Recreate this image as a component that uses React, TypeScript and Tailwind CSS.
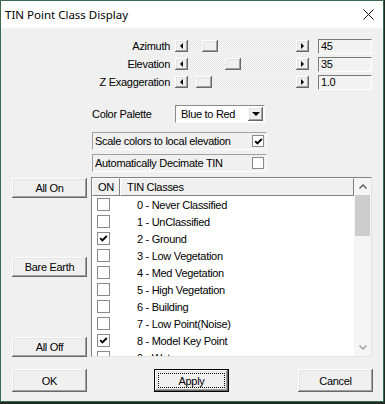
import React from "react";

const raised =
  "bg-[#f0f0f0] shadow-[inset_-1px_-1px_#696969,inset_1px_1px_#ffffff,inset_-2px_-2px_#a0a0a0,inset_2px_2px_#e3e3e3]";

function Btn({ label, w = "w-[75px]", h = "h-[20px]", cls = "" }: { label: string; w?: string; h?: string; cls?: string }) {
  return (
    <div className={`${raised} ${w} ${h} ${cls} flex items-center justify-center shrink-0`}>
      <span className="pt-[1px]">{label}</span>
    </div>
  );
}

function Tri({ dir }: { dir: "l" | "r" | "d" }) {
  if (dir === "l")
    return <div className="w-0 h-0 border-y-[3px] border-y-transparent border-r-[3px] border-r-black" />;
  if (dir === "r")
    return <div className="w-0 h-0 border-y-[3px] border-y-transparent border-l-[3px] border-l-black" />;
  return <div className="w-0 h-0 border-x-[4px] border-x-transparent border-t-[4px] border-t-black" />;
}

function Slider({ pos, value, label }: { pos: number; value: string; label: string }) {
  return (
    <div className="flex items-center h-[18px]">
      <div className="w-[169px] text-right pt-[1px]">{label}</div>
      <div className="ml-[5px] w-[134px] h-[12px] flex bg-[repeating-conic-gradient(#e2e2e2_0_25%,#fbfbfb_0_50%)] bg-[length:2px_2px]">
        <div className={`${raised} w-[13px] h-[12px] flex items-center justify-center`}>
          <Tri dir="l" />
        </div>
        <div className="relative flex-1">
          <div className={`${raised} absolute top-0 w-[16px] h-[12px]`} style={{ left: pos }} />
        </div>
        <div className={`${raised} w-[13px] h-[12px] flex items-center justify-center`}>
          <Tri dir="r" />
        </div>
      </div>
      <div className="ml-[9px] w-[54px] h-[15px] bg-[#f2f2f2] border-t border-l border-[#7a7a7a] border-b border-r border-b-white border-r-white flex items-center pl-[2px] pt-[1px]">
        {value}
      </div>
    </div>
  );
}

function Check({ on, size = "w-[12px] h-[12px]" }: { on: boolean; size?: string }) {
  return (
    <div className={`${size} bg-white border border-[#8a8a8a] flex items-center justify-center`}>
      {on && (
        <svg width="9" height="9" viewBox="0 0 9 9">
          <path d="M1.2 4.2 L3.4 6.5 L7.8 2" stroke="#000" strokeWidth="1.9" fill="none" />
        </svg>
      )}
    </div>
  );
}

const rows: [string, boolean][] = [
  ["0 - Never Classified", false],
  ["1 - UnClassified", false],
  ["2 - Ground", true],
  ["3 - Low Vegetation", false],
  ["4 - Med Vegetation", false],
  ["5 - High Vegetation", false],
  ["6 - Building", false],
  ["7 - Low Point(Noise)", false],
  ["8 - Model Key Point", true],
  ["9 - Water", false],
];

export default function App() {
  return (
    <div className="w-[385px] h-[404px] bg-[#1f2a24] font-['Liberation_Sans',Arial,sans-serif] text-[11px] tracking-[-0.3px] text-black leading-none">
      <div className="w-[384px] h-[402px] border border-[#3a6b4e] bg-[#f0f0f0] flex flex-col overflow-hidden">
        {/* title bar */}
        <div className="h-[27px] bg-white flex items-center justify-between pl-[4px] pr-[8px] shrink-0">
          <span className="font-['Noto_Sans',sans-serif] text-[11.5px] tracking-normal">TIN Point Class Display</span>
          <svg width="11" height="11" viewBox="0 0 11 11" className="mr-[1px]">
            <path d="M0.5 0.5 L10.5 10.5 M10.5 0.5 L0.5 10.5" stroke="#111" strokeWidth="1" />
          </svg>
        </div>

        {/* sliders */}
        <div className="pt-[9px] flex flex-col">
          <Slider label="Azimuth" pos={14} value="45" />
          <Slider label="Elevation" pos={37} value="35" />
          <Slider label="Z Exaggeration" pos={8} value="1.0" />
        </div>

        {/* color palette */}
        <div className="mt-[14px] flex items-center h-[18px] pl-[91px]">
          <div className="w-[83px] pt-[1px]">Color Palette</div>
          <div className="w-[90px] h-[18px] bg-white border-t border-l border-[#8a8a8a] border-b border-r border-b-white border-r-white flex items-center">
            <span className="pl-[5px] flex-1 pt-[1px]">Blue to Red</span>
            <div className={`${raised} w-[15px] h-[14px] mr-[1px] flex items-center justify-center`}>
              <Tri dir="d" />
            </div>
          </div>
        </div>

        <div className="mt-[9px] ml-[91px] w-[175px] h-[18px] border-t border-l border-[#a0a0a0] border-b border-r border-b-white border-r-white flex items-center pl-[2px]">
          <span className="flex-1 pt-[1px]">Scale colors to local elevation</span>
          <Check on={true} size="w-[12px] h-[12px] mr-[2px]" />
        </div>
        <div className="mt-[4px] ml-[91px] w-[175px] h-[18px] border-t border-l border-[#a0a0a0] border-b border-r border-b-white border-r-white flex items-center pl-[2px]">
          <span className="flex-1 pt-[1px]">Automatically Decimate TIN</span>
          <Check on={false} size="w-[12px] h-[12px] mr-[2px]" />
        </div>

        {/* lower section */}
        <div className="mt-[5px] flex pl-[11px]">
          <div className="flex flex-col w-[75px]">
            <Btn label="All On" cls="mt-[1px]" />
            <Btn label="Bare Earth" cls="mt-[59px]" />
            <Btn label="All Off" cls="mt-[60px]" />
          </div>
          <div className="ml-[4px] w-[281px] h-[180px] bg-white border-t border-l border-[#828282] border-b border-r border-b-[#e3e3e3] border-r-[#e3e3e3] flex overflow-hidden">
            <div className="flex-1 flex flex-col overflow-hidden">
              <div className="h-[18px] flex shrink-0 bg-[#f0f0f0]">
                <div className="w-[28px] h-full border-r border-b border-[#808080] border-t border-l border-t-white border-l-white flex items-center justify-center pt-[1px]">
                  ON
                </div>
                <div className="flex-1 h-full border-r border-b border-[#808080] border-t border-l border-t-white border-l-white flex items-center pl-[6px] pt-[1px]">
                  TIN Classes
                </div>
              </div>
              {rows.map(([t, on]) => (
                <div key={t} className="h-[17px] flex items-center shrink-0">
                  <div className="ml-[5px] w-[13px]">
                    <Check on={on} size="w-[13px] h-[13px]" />
                  </div>
                  <span className="ml-[27px] pt-[2px]">{t}</span>
                </div>
              ))}
            </div>
            <div className="w-[17px] h-full bg-[#f5f5f5] flex flex-col items-center">
              <div className="h-[17px] flex items-center justify-center">
                <svg width="8" height="5" viewBox="0 0 8 5">
                  <path d="M0.5 4.5 L4 1 L7.5 4.5" stroke="#555" strokeWidth="1.3" fill="none" />
                </svg>
              </div>
              <div className="w-[15px] h-[41px] bg-[#cdcdcd]" />
              <div className="flex-1" />
              <div className="h-[17px] flex items-center justify-center">
                <svg width="8" height="5" viewBox="0 0 8 5">
                  <path d="M0.5 0.5 L4 4 L7.5 0.5" stroke="#999" strokeWidth="1.3" fill="none" />
                </svg>
              </div>
            </div>
          </div>
        </div>

        {/* bottom buttons */}
        <div className="mt-[12px] flex pl-[11px]">
          <Btn label="OK" h="h-[23px]" />
          <div className="ml-[67px] w-[75px] h-[23px] border border-black">
            <div className={`${raised} w-full h-full flex items-center justify-center p-[3px]`}>
              <div className="w-full h-full border border-dotted border-black flex items-center justify-center pt-[1px]">
                Apply
              </div>
            </div>
          </div>
          <Btn label="Cancel" h="h-[23px]" cls="ml-[69px]" />
        </div>
      </div>
    </div>
  );
}
